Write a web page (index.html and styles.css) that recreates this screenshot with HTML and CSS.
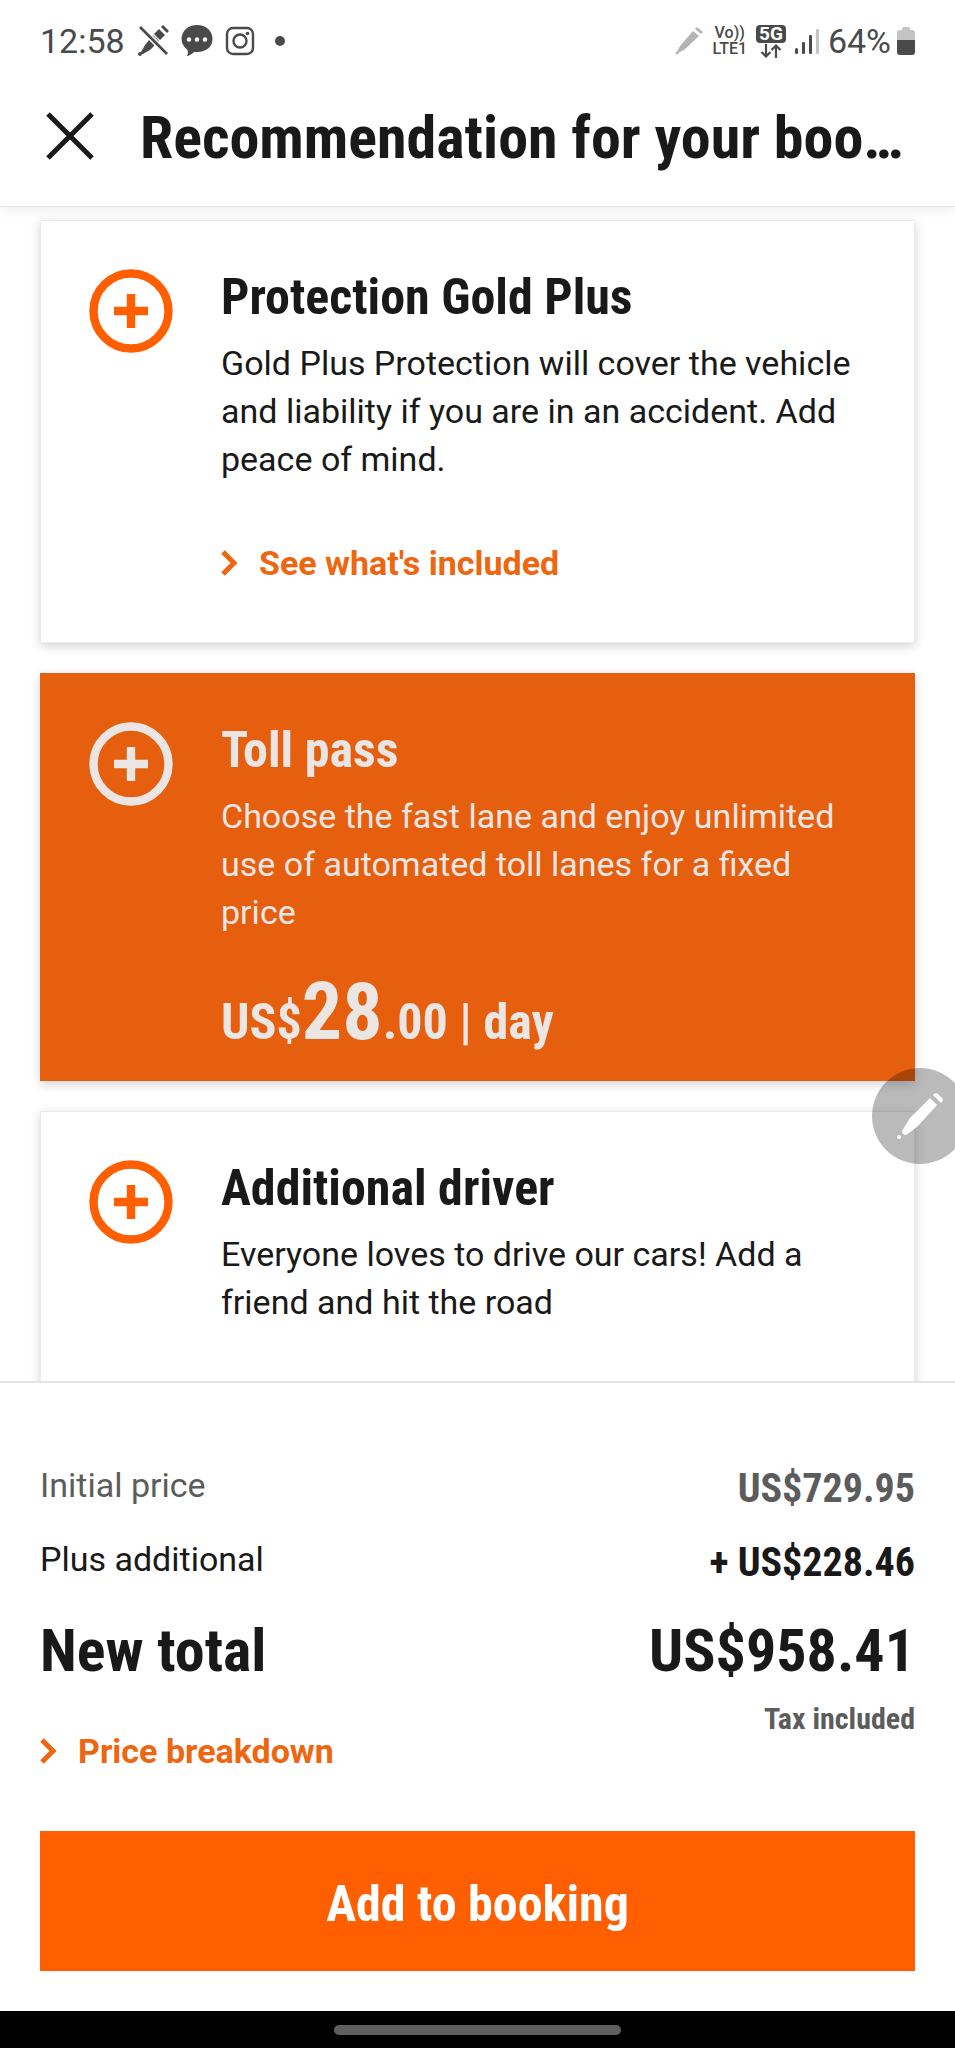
FILE: index.html
```html
<!DOCTYPE html>
<html lang="en">
<head>
<meta charset="utf-8">
<meta name="viewport" content="width=device-width, initial-scale=1">
<title>Recommendation for your booking</title>
<link rel="stylesheet" href="styles.css">
</head>
<body>
<div class="statusbar">
  <div class="status-group">
    <span class="clock">12:58</span>
    <svg class="status-icon" width="32" height="32" viewBox="0 0 32 32" aria-hidden="true">
      <g fill="#4a4a4a"><path d="M16 10l6 6-9 9-7 4-2 0 0-2 4-7z"/><path d="M17 9l5-5 6 6-5 5z"/><path d="M24 2l2-2 6 6-2 2z"/><circle cx="3" cy="29" r="2"/></g>
      <path d="M3 2l27 27" stroke="#fff" stroke-width="6"/><path d="M3 2l27 27" stroke="#4a4a4a" stroke-width="2.6"/>
    </svg>
    <svg class="status-icon" width="32" height="32" viewBox="0 0 32 32" aria-hidden="true">
      <path d="M16 0c9 0 15.500 6 15.500 14S25 27 16 27h-3c-2 2-4 3.500-7 4 1-2 1-4 .5-6C3 22 .5 18.500.5 14 .5 6 7 0 16 0z" fill="#4a4a4a"/>
      <g fill="#fff"><circle cx="8" cy="14.500" r="2.200"/><circle cx="16" cy="14.500" r="2.200"/><circle cx="24" cy="14.500" r="2.200"/></g>
    </svg>
    <svg class="status-icon" width="30" height="30" viewBox="0 0 30 30" fill="none" stroke="#4a4a4a" stroke-width="2.400" aria-hidden="true">
      <rect x="2" y="2" width="26" height="26" rx="6"/><circle cx="15" cy="15" r="6.500"/><circle cx="22.500" cy="7.500" r="1.800" fill="#4a4a4a" stroke="none"/>
    </svg>
    <span class="more-dot"></span>
  </div>
  <div class="status-group status-right">
    <svg width="28" height="28" viewBox="0 0 28 28" fill="#b4b4b4" aria-hidden="true"><path d="M18 4l6 5L9 23l-6 3-1-1 3-6z"/><path d="M20 2l2-2 6 5-2 2z"/><circle cx="2" cy="26" r="1.500"/></svg>
    <span class="volte"><span>Vo))</span><span>LTE1</span></span>
    <span class="fiveg"><span class="fiveg-badge">5G</span>
      <svg width="22" height="14" viewBox="0 0 22 14" fill="none" stroke="#4a4a4a" stroke-width="2.200" aria-hidden="true"><path d="M6 0v12M1.500 8L6 12.500 10.500 8M16 14V2M11.500 6L16 1.500 20.500 6"/></svg>
    </span>
    <svg width="24" height="26" viewBox="0 0 24 26" aria-hidden="true"><g fill="#4a4a4a"><rect x="0" y="20" width="3" height="6" rx="1.500"/><rect x="7" y="14" width="3" height="12" rx="1"/><rect x="14" y="7" width="3" height="19" rx="1"/></g><rect x="21" y="1" width="3" height="25" rx="1" fill="#c4c4c4"/></svg>
    <span class="battery"><span class="clock">64%</span>
      <svg width="18" height="28" viewBox="0 0 18 28" aria-hidden="true"><path d="M5 1.500Q5 0 6.500 0h5Q13 0 13 1.500V3h2.500Q18 3 18 5.500V14H0V5.500Q0 3 2.500 3H5z" fill="#c4c4c4"/><path d="M0 13h18v12q0 3-3 3H3q-3 0-3-3z" fill="#4a4a4a"/></svg>
    </span>
  </div>
</div>
<header class="header">
  <button class="close" type="button" aria-label="Close"><svg width="48" height="48" viewBox="0 0 48 48" fill="none" stroke="#191919" stroke-width="5" aria-hidden="true"><path d="M2 2l44 44M46 2L2 46"/></svg></button>
  <h1 class="heading">Recommendation for your booking</h1>
</header>
<main class="offers">
  <section class="card">
    <button class="add" type="button" aria-label="Add Protection Gold Plus"><svg viewBox="0 0 84 84" fill="none" stroke="currentColor" stroke-width="8.400"><circle cx="42" cy="42" r="37.500"/><path d="M42 25v34M25 42h34"/></svg></button>
    <div class="card-body">
      <h2 class="card-title">Protection Gold Plus</h2>
      <p class="text">Gold Plus Protection will cover the vehicle and liability if you are in an accident. Add peace of mind.</p>
      <a class="link card-link" href="#included"><svg class="chevron" viewBox="0 0 18 28" fill="none" stroke="currentColor" stroke-width="5"><path d="M2 3l11 11L2 25"/></svg>See what's included</a>
    </div>
  </section>
  <section class="card card-active">
    <button class="add" type="button" aria-label="Add Toll pass"><svg viewBox="0 0 84 84" fill="none" stroke="currentColor" stroke-width="8.400"><circle cx="42" cy="42" r="37.500"/><path d="M42 25v34M25 42h34"/></svg></button>
    <div class="card-body">
      <h2 class="card-title">Toll pass</h2>
      <p class="text">Choose the fast lane and enjoy unlimited use of automated toll lanes for a fixed price</p>
      <p class="price">US$<span class="price-main">28</span>.00 | day</p>
    </div>
  </section>
  <section class="card">
    <button class="add" type="button" aria-label="Add Additional driver"><svg viewBox="0 0 84 84" fill="none" stroke="currentColor" stroke-width="8.400"><circle cx="42" cy="42" r="37.500"/><path d="M42 25v34M25 42h34"/></svg></button>
    <div class="card-body">
      <h2 class="card-title">Additional driver</h2>
      <p class="text">Everyone loves to drive our cars! Add a friend and hit the road</p>
    </div>
  </section>
  <button class="pen" type="button" aria-label="Open pen menu"><svg width="46" height="46" viewBox="0 0 46 46" fill="#fff"><path d="M33 5l7 7-20 22-11 8q-4 0-4-4l8-13z"/><path d="M36 2q2-3 5-1l4 4q2 2-1 5z"/><circle cx="2" cy="44" r="2"/></svg></button>
</main>
<footer class="summary">
  <dl class="totals">
    <div class="row row-muted"><dt>Initial price</dt><dd>US$729.95</dd></div>
    <div class="row"><dt>Plus additional</dt><dd>+ US$228.46</dd></div>
    <div class="row row-total"><dt>New total</dt><dd>US$958.41</dd></div>
  </dl>
  <div class="notes">
    <a class="link" href="#breakdown"><svg class="chevron" viewBox="0 0 18 28" fill="none" stroke="currentColor" stroke-width="5"><path d="M2 3l11 11L2 25"/></svg>Price breakdown</a>
    <span class="tax">Tax included</span>
  </div>
  <button class="submit" type="button">Add to booking</button>
</footer>
<div class="navbar"><span class="handle"></span></div>
</body>
</html>
```

FILE: styles.css
```css
:root {
  --ink: #191919;
  --muted: #5c5c5c;
  --orange: #ff5f00;
  --link: #ee660f;
  --display: "Roboto Condensed", "Liberation Sans Narrow", Roboto, sans-serif;
}

* { box-sizing: border-box; margin: 0; }

body {
  display: flex;
  flex-direction: column;
  height: 100vh;
  background: #fff;
  color: var(--ink);
  font: 34px/48px Roboto, sans-serif;
}

button { border: 0; padding: 0; background: none; color: inherit; font: inherit; cursor: pointer; }

svg { display: block; flex: none; }

.statusbar {
  position: relative;
  z-index: 2;
  display: flex;
  justify-content: space-between;
  align-items: center;
  height: 82px;
  padding: 0 40px;
  background: #fff;
  color: #4a4a4a;
}

.status-group { display: flex; align-items: center; gap: 12px; }
.status-right { gap: 9px; }
.more-dot { width: 10px; height: 10px; margin-left: 8px; border-radius: 50%; background: #4a4a4a; }
.volte { display: flex; flex-direction: column; align-items: center; font-size: 16px; line-height: 16px; font-weight: 500; }
.fiveg { display: flex; flex-direction: column; align-items: center; gap: 1px; }
.fiveg-badge { padding: 0 3px; border-radius: 4px; background: #4a4a4a; color: #fff; font-size: 19px; line-height: 18px; font-weight: 700; }
.battery { display: flex; align-items: center; gap: 6px; }

.header {
  position: relative;
  z-index: 1;
  display: flex;
  align-items: center;
  gap: 46px;
  height: 125px;
  padding: 0 46px 16px;
  border-bottom: 1px solid #e4e4e4;
  background: #fff;
  box-shadow: 0 2px 12px rgba(0, 0, 0, 0.08);
}

.heading {
  flex: 1;
  min-width: 0;
  padding-top: 4px;
  overflow: hidden;
  font: 700 60px/72px var(--display);
  text-overflow: ellipsis;
  white-space: nowrap;
}

.offers {
  position: relative;
  display: flex;
  flex: 1;
  flex-direction: column;
  gap: 30px;
  min-height: 0;
  padding: 13px 40px 0;
  overflow: hidden;
}

.card {
  display: flex;
  flex: none;
  align-items: flex-start;
  gap: 48px;
  padding: 48px 48px 55px;
  border: 1px solid #ececec;
  background: #fff;
  box-shadow: 0 3px 10px rgba(0, 0, 0, 0.18);
}

.card:last-of-type { padding-bottom: 96px; }

.card-active {
  padding-bottom: 18px;
  border-color: #e55f0f;
  background: #e55f0f;
  color: #ebe6e3;
}

.add { flex: none; width: 84px; height: 84px; color: var(--orange); }
.card-active .add { color: inherit; }
.card-body { flex: 1; }
.card-title { margin-bottom: 14px; font: 700 50px/56px var(--display); }

.link {
  display: flex;
  align-items: center;
  gap: 20px;
  color: var(--link);
  font-weight: 700;
  text-decoration: none;
}

.card-link { margin-top: 56px; }
.chevron { width: 18px; height: 28px; }
.price { margin-top: 36px; font: 700 50px/80px var(--display); }
.price-main { font-size: 80px; }

.pen {
  position: absolute;
  right: -13px;
  bottom: 217px;
  display: grid;
  place-items: center;
  width: 96px;
  height: 96px;
  border-radius: 50%;
  background: rgba(0, 0, 0, 0.27);
}

.summary { padding: 78px 40px 40px; border-top: 2px solid #e4e4e4; }
.totals { display: grid; gap: 18px; }
.row { display: flex; justify-content: space-between; align-items: flex-start; }
.row dd { margin: 0; font: 700 40px/56px var(--display); }
.row-muted { color: var(--muted); }
.row-total { margin-top: 6px; }
.row-total dt, .row-total dd { font: 700 60px/72px var(--display); }
.notes { display: flex; justify-content: space-between; align-items: flex-start; }
.notes .link { margin-top: 40px; }
.tax { margin-top: 12px; color: var(--muted); font: 700 30px/40px var(--display); }

.submit {
  width: 100%;
  margin-top: 56px;
  padding: 39px 0 33px;
  background: var(--orange);
  color: #fff;
  font: 700 50px/68px var(--display);
}

.navbar { display: grid; place-items: center; height: 37px; background: #000; }
.handle { width: 30%; height: 10px; border-radius: 5px; background: #5e5e5e; }
```
